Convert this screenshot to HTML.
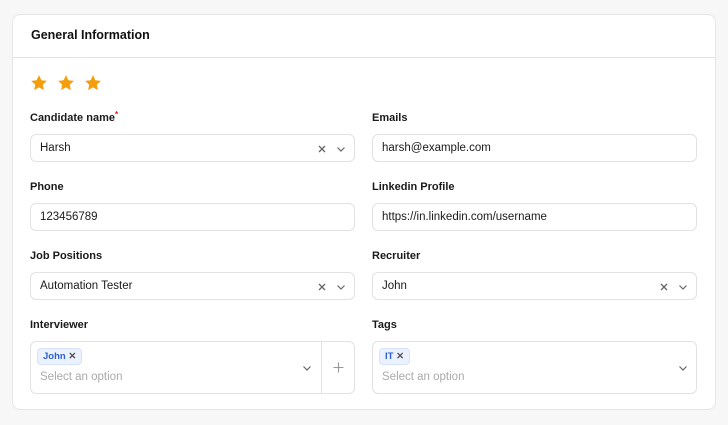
<!DOCTYPE html><html><head><style>
*{box-sizing:border-box;margin:0;padding:0}
body{width:728px;height:425px;background:#f7f7f7;font-family:"Liberation Sans",sans-serif;position:relative;overflow:hidden;color:#111}
.card{position:absolute;left:12px;top:14px;width:704px;height:396px;background:#fff;border:1px solid #e6e6e6;border-radius:8px}
.hd{height:43px;border-bottom:1px solid #e4e4e4;padding:13px 0 0 18px;font-size:12.5px;font-weight:bold}
.a{position:absolute}
.lab{font-size:11px;font-weight:bold;color:#1a1a1a}
.in{border:1px solid #e2e2e2;border-radius:6px;height:28px;width:325px;font-size:11.5px;padding:7px 9px;color:#1a1a1a}
.ic{position:absolute;top:9px}
.tag{display:inline-block;background:#eaf1ff;border:1px solid #d6e3fb;border-radius:4px;color:#2f5fd0;font-size:9.5px;font-weight:bold;padding:2px 5px}
.ph{color:#aaa;font-size:11.5px}
svg{display:block}
</style></head><body>
<div class="card"><div class="hd">General Information</div></div>
<div class="a" style="left:30px;top:74px;display:flex;gap:9px">
<svg width="18" height="18" viewBox="0 0 24 23"><path d="M12 1l3.2 6.8 7.3.9-5.4 5 1.4 7.3L12 17.4 5.5 21l1.4-7.3-5.4-5 7.3-.9z" fill="#f59e0b"/></svg>
<svg width="18" height="18" viewBox="0 0 24 23"><path d="M12 1l3.2 6.8 7.3.9-5.4 5 1.4 7.3L12 17.4 5.5 21l1.4-7.3-5.4-5 7.3-.9z" fill="#f59e0b"/></svg>
<svg width="18" height="18" viewBox="0 0 24 23"><path d="M12 1l3.2 6.8 7.3.9-5.4 5 1.4 7.3L12 17.4 5.5 21l1.4-7.3-5.4-5 7.3-.9z" fill="#f59e0b"/></svg>
</div>
<div class="a lab" style="left:30px;top:112px">Candidate name<span style="color:#e11;font-size:8px;position:relative;top:-4px">*</span></div>
<div class="a in" style="left:30px;top:134px">Harsh
<svg class="ic" style="left:286px" width="10" height="10" viewBox="0 0 10 10"><path d="M2 2l6 6M8 2l-6 6" stroke="#666" stroke-width="1.3"/></svg>
<svg class="ic" style="left:305px" width="10" height="10" viewBox="0 0 10 10"><path d="M1.5 3.5l3.5 3.5 3.5-3.5" stroke="#666" stroke-width="1.2" fill="none"/></svg></div>
<div class="a lab" style="left:372px;top:112px">Emails</div>
<div class="a in" style="left:372px;top:134px">harsh@example.com</div>
<div class="a lab" style="left:30px;top:181px">Phone</div>
<div class="a in" style="left:30px;top:203px">123456789</div>
<div class="a lab" style="left:372px;top:181px">Linkedin Profile</div>
<div class="a in" style="left:372px;top:203px">https://in.linkedin.com/username</div>
<div class="a lab" style="left:30px;top:250px">Job Positions</div>
<div class="a in" style="left:30px;top:272px">Automation Tester
<svg class="ic" style="left:286px" width="10" height="10" viewBox="0 0 10 10"><path d="M2 2l6 6M8 2l-6 6" stroke="#666" stroke-width="1.3"/></svg>
<svg class="ic" style="left:305px" width="10" height="10" viewBox="0 0 10 10"><path d="M1.5 3.5l3.5 3.5 3.5-3.5" stroke="#666" stroke-width="1.2" fill="none"/></svg></div>
<div class="a lab" style="left:372px;top:250px">Recruiter</div>
<div class="a in" style="left:372px;top:272px">John
<svg class="ic" style="left:286px" width="10" height="10" viewBox="0 0 10 10"><path d="M2 2l6 6M8 2l-6 6" stroke="#666" stroke-width="1.3"/></svg>
<svg class="ic" style="left:305px" width="10" height="10" viewBox="0 0 10 10"><path d="M1.5 3.5l3.5 3.5 3.5-3.5" stroke="#666" stroke-width="1.2" fill="none"/></svg></div>
<div class="a lab" style="left:30px;top:319px">Interviewer</div>
<div class="a in" style="left:30px;top:341px;height:53px;padding:6px 6px">
<span class="tag">John <span style="color:#555">✕</span></span><div class="ph" style="margin:6px 0 0 3px">Select an option</div>
<svg class="ic" style="left:271px;top:21px" width="10" height="10" viewBox="0 0 10 10"><path d="M1.5 3.5l3.5 3.5 3.5-3.5" stroke="#666" stroke-width="1.2" fill="none"/></svg>
<div style="position:absolute;left:290px;top:0;width:1px;height:51px;background:#e2e2e2"></div>
<svg class="ic" style="left:302px;top:20px" width="11" height="11" viewBox="0 0 11 11"><path d="M5.5 0.5v10M0.5 5.5h10" stroke="#999" stroke-width="1.1"/></svg></div>
<div class="a lab" style="left:372px;top:319px">Tags</div>
<div class="a in" style="left:372px;top:341px;height:53px;padding:6px 6px">
<span class="tag">IT <span style="color:#555">✕</span></span><div class="ph" style="margin:6px 0 0 3px">Select an option</div>
<svg class="ic" style="left:305px;top:21px" width="10" height="10" viewBox="0 0 10 10"><path d="M1.5 3.5l3.5 3.5 3.5-3.5" stroke="#666" stroke-width="1.2" fill="none"/></svg></div>
</body></html>
